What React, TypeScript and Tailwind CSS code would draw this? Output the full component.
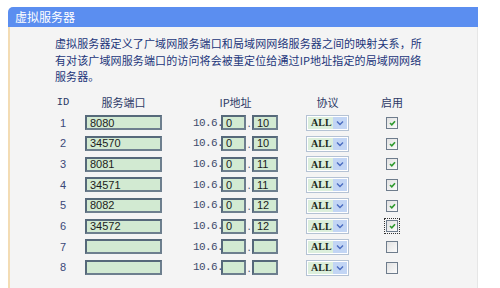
const rows = [
  { id: 1, port: "8080", a: "0", b: "10", on: true },
  { id: 2, port: "34570", a: "0", b: "10", on: true },
  { id: 3, port: "8081", a: "0", b: "11", on: true },
  { id: 4, port: "34571", a: "0", b: "11", on: true },
  { id: 5, port: "8082", a: "0", b: "12", on: true },
  { id: 6, port: "34572", a: "0", b: "12", on: true, focus: true },
  { id: 7, port: "", a: "", b: "", on: false },
  { id: 8, port: "", a: "", b: "", on: false },
];

const cjk = "font-['SimSun','Noto_Sans_CJK_SC',sans-serif]";
const mono = "font-['Liberation_Mono','Noto_Sans_CJK_SC',monospace]";

function Field({ value, className }: { value: string; className: string }) {
  return (
    <div
      className={`flex h-[15px] items-center border-2 border-[#56697a] border-r-[#6d7f8e] border-b-[#6d7f8e] bg-[#d2ead2] pl-[3px] font-['Liberation_Sans',sans-serif] text-[11px] text-[#1c1c1c] ${className}`}
    >
      {value}
    </div>
  );
}

function Select() {
  return (
    <div className="flex h-[16px] w-[43px] border border-[#b4c2d4] bg-white p-px">
      <div className="flex flex-1 items-center bg-[#dcefdc] pl-[3px] font-['Liberation_Serif',serif] text-[10px] font-bold text-[#1c2a1c]">ALL</div>
      <div className="flex w-[14px] items-center justify-center bg-[#c2d5f4]">
        <svg width="8" height="6" viewBox="0 0 8 6">
          <path d="M1 1.5 L4 4.5 L7 1.5" fill="none" stroke="#4a6cc0" strokeWidth="1.4" />
        </svg>
      </div>
    </div>
  );
}

function Check({ on, focus }: { on: boolean; focus?: boolean }) {
  return (
    <div className={`flex h-[16px] w-[16px] items-center justify-center ${focus ? "outline-1 outline-dotted outline-[#333] -outline-offset-1" : ""}`}>
      <div className="flex h-[12px] w-[12px] items-center justify-center border border-[#6e7c8c] bg-gradient-to-br from-[#e2e2e2] to-[#fbfbfb]">
        {on && (
          <svg width="7" height="6" viewBox="0 0 7 6">
            <path d="M1 3 L2.8 4.8 L6 1.2" fill="none" stroke="#2f9a2f" strokeWidth="1.6" />
          </svg>
        )}
      </div>
    </div>
  );
}

export default function App() {
  return (
    <div className="h-[288px] w-[500px] overflow-hidden bg-white pl-[8px] pt-[7px]">
      <div className="w-[470px]">
        <div className={`flex h-[20px] items-center rounded-tl-[5px] bg-[#5b8ef0] pl-[7px] ${cjk} text-[12px] text-white`}>
          虚拟服务器
        </div>
        <div className="h-[270px] border-l-2 border-r border-l-[#f3dcb4] border-r-[#e6e6e6] bg-[#f4f4f4] pt-[8px]">
          <div className={`pl-[45px] ${cjk} text-[11px] leading-[16.5px] tracking-[0.12px] text-[#22347a]`}>
            <div className="whitespace-nowrap">虚拟服务器定义了广域网服务端口和局域网网络服务器之间的映射关系，所</div>
            <div className="whitespace-nowrap">有对该广域网服务端口的访问将会被重定位给通过IP地址指定的局域网网络</div>
            <div className="whitespace-nowrap">服务器。</div>
          </div>

          <div className={`mt-[8px] flex h-[20px] items-center pl-[40px] text-[11px] text-[#2c3966] ${cjk}`}>
            <div className={`w-[26px] text-center ${mono} text-[10.5px]`}>ID</div>
            <div className="ml-[9px] w-[77px] text-center">服务端口</div>
            <div className="ml-[31px] w-[85px] text-center">IP地址</div>
            <div className="ml-[28px] w-[43px] text-center">协议</div>
            <div className="ml-[35px] w-[16px] whitespace-nowrap text-center -indent-[3px]">启用</div>
          </div>

          {rows.map((r) => (
            <div key={r.id} className="flex h-[20.7px] items-center pl-[40px]">
              <div className="w-[26px] text-center font-['Liberation_Sans',sans-serif] text-[11px] text-[#3a4878]">{r.id}</div>
              <Field value={r.port} className="ml-[9px] w-[77px]" />
              <div className={`ml-[31px] w-[28px] whitespace-nowrap ${mono} text-[11px] tracking-[-0.6px] text-[#3d4a6a]`}>10.6.</div>
              <Field value={r.a} className="w-[25px]" />
              <div className="w-[6px] text-center text-[10px] leading-[14px] text-[#3d4a6a]">.</div>
              <Field value={r.b} className="w-[26px]" />
              <div className="ml-[28px]">
                <Select />
              </div>
              <div className="ml-[35px]">
                <Check on={r.on} focus={r.focus} />
              </div>
            </div>
          ))}
        </div>
      </div>
    </div>
  );
}
